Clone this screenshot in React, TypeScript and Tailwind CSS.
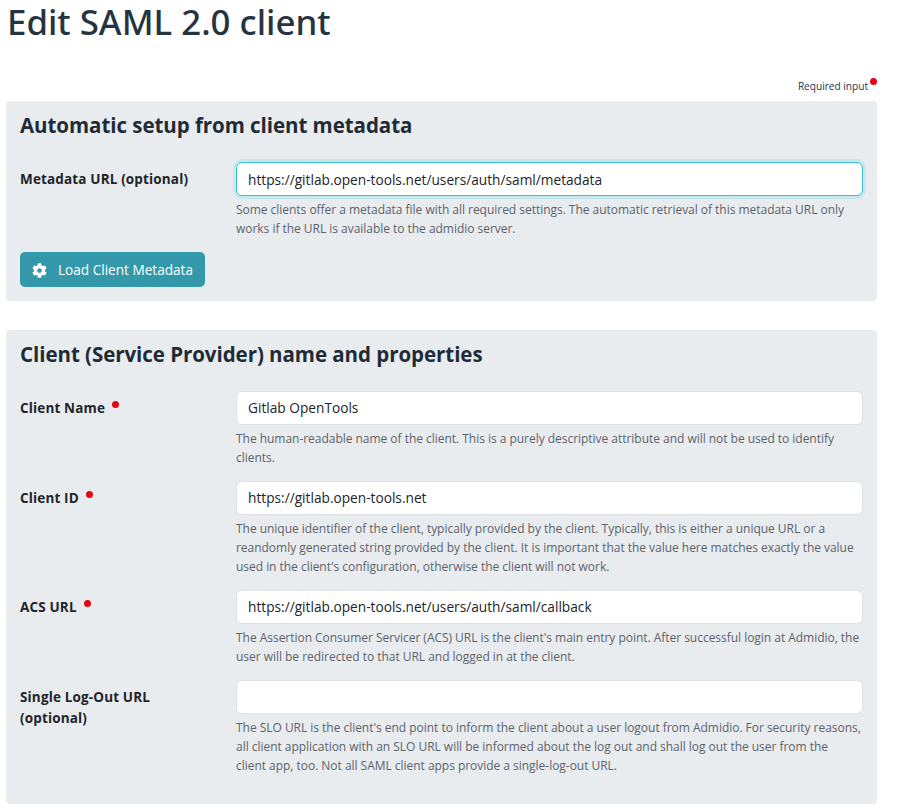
import { FaCog } from "react-icons/fa";

const font = "font-['Open_Sans','Noto_Sans',sans-serif]";

type FieldProps = {
  label: string;
  value: string;
  help: string[];
  required?: boolean;
  focused?: boolean;
  labelLines?: string[];
};

function Dot() {
  return <span className="inline-block w-[7px] h-[7px] rounded-full bg-[#e30613]" />;
}

function Field({ label, value, help, required, focused, labelLines }: FieldProps) {
  return (
    <div className="flex mb-[14px]">
      <div className="w-[216px] shrink-0 pt-[7px] text-[13.5px] leading-[21px] font-bold text-[#212529] tracking-[0.15px]">
        {labelLines ? (
          labelLines.map((l) => <div key={l}>{l}</div>)
        ) : (
          <div className="flex items-start">
            {label}
            {required && (
              <span className="ml-[7px] -mt-[1px] flex h-[14px] items-center">
                <Dot />
              </span>
            )}
          </div>
        )}
      </div>
      <div className="flex-1 min-w-0">
        <div
          className={
            focused
              ? "h-[34px] rounded-[6px] bg-white border border-[#3fbdd0] ring-[3px] ring-[#c5e9ef] pl-[11px] pt-[2px] flex items-center text-[13.7px] text-[#212529]"
              : "h-[34px] rounded-[6px] bg-white border border-[#dee2e6] pl-[11px] pt-[1px] flex items-center text-[13.7px] text-[#212529]"
          }
        >
          {value}
        </div>
        <div className="mt-[4px] text-[12px] leading-[19px] text-[#5c636a] tracking-[-0.03px] whitespace-nowrap">
          {help.map((l) => (
            <div key={l}>{l}</div>
          ))}
        </div>
      </div>
    </div>
  );
}

function Card({ title, children }: { title: string; children: React.ReactNode }) {
  return (
    <section className="rounded-[4px] bg-[#e9ecef] px-[14px] pt-[11px] pb-[14px]">
      <h2 className="text-[20.5px] leading-[26px] font-bold text-[#212b36] mb-[24px] tracking-[-0.05px]">{title}</h2>
      {children}
    </section>
  );
}

export default function App() {
  return (
    <div className={`${font} bg-white h-[811px] overflow-hidden pl-[6px] pr-[20px]`}>
      <h1 className="font-['Noto_Sans',sans-serif] text-[34.8px] leading-[43px] text-[#263442] font-medium pl-[1px] whitespace-nowrap">
        Edit SAML 2.0 client
      </h1>
      <div className="flex justify-end items-start mt-[33px] h-[25px]">
        <span className="text-[10.1px] leading-[16px] mt-[2px] text-[#1c3557]">Required input</span>
        <span className="ml-[2px] mt-[2px] flex">
          <Dot />
        </span>
      </div>

      <Card title="Automatic setup from client metadata">
        <Field
          label="Metadata URL (optional)"
          value="https://gitlab.open-tools.net/users/auth/saml/metadata"
          focused
          help={[
            "Some clients offer a metadata file with all required settings. The automatic retrieval of this metadata URL only",
            "works if the URL is available to the admidio server.",
          ]}
        />
        <button className="h-[35px] w-[185px] rounded-[5px] bg-[#3399aa] text-white text-[13.6px] flex items-center pl-[12px] pt-[1px]">
          <FaCog className="w-[15px] h-[15px] mr-[11px]" />
          Load Client Metadata
        </button>
      </Card>

      <div className="mt-[29px]">
        <Card title="Client (Service Provider) name and properties">
          <Field
            label="Client Name"
            required
            value="Gitlab OpenTools"
            help={[
              "The human-readable name of the client. This is a purely descriptive attribute and will not be used to identify",
              "clients.",
            ]}
          />
          <Field
            label="Client ID"
            required
            value="https://gitlab.open-tools.net"
            help={[
              "The unique identifier of the client, typically provided by the client. Typically, this is either a unique URL or a",
              "reandomly generated string provided by the client. It is important that the value here matches exactly the value",
              "used in the client's configuration, otherwise the client will not work.",
            ]}
          />
          <Field
            label="ACS URL"
            required
            value="https://gitlab.open-tools.net/users/auth/saml/callback"
            help={[
              "The Assertion Consumer Servicer (ACS) URL is the client's main entry point. After successful login at Admidio, the",
              "user will be redirected to that URL and logged in at the client.",
            ]}
          />
          <Field
            label="Single Log-Out URL (optional)"
            labelLines={["Single Log-Out URL", "(optional)"]}
            value=""
            help={[
              "The SLO URL is the client's end point to inform the client about a user logout from Admidio. For security reasons,",
              "all client application with an SLO URL will be informed about the log out and shall log out the user from the",
              "client app, too. Not all SAML client apps provide a single-log-out URL.",
            ]}
          />
          <div className="h-px" />
        </Card>
      </div>
    </div>
  );
}
